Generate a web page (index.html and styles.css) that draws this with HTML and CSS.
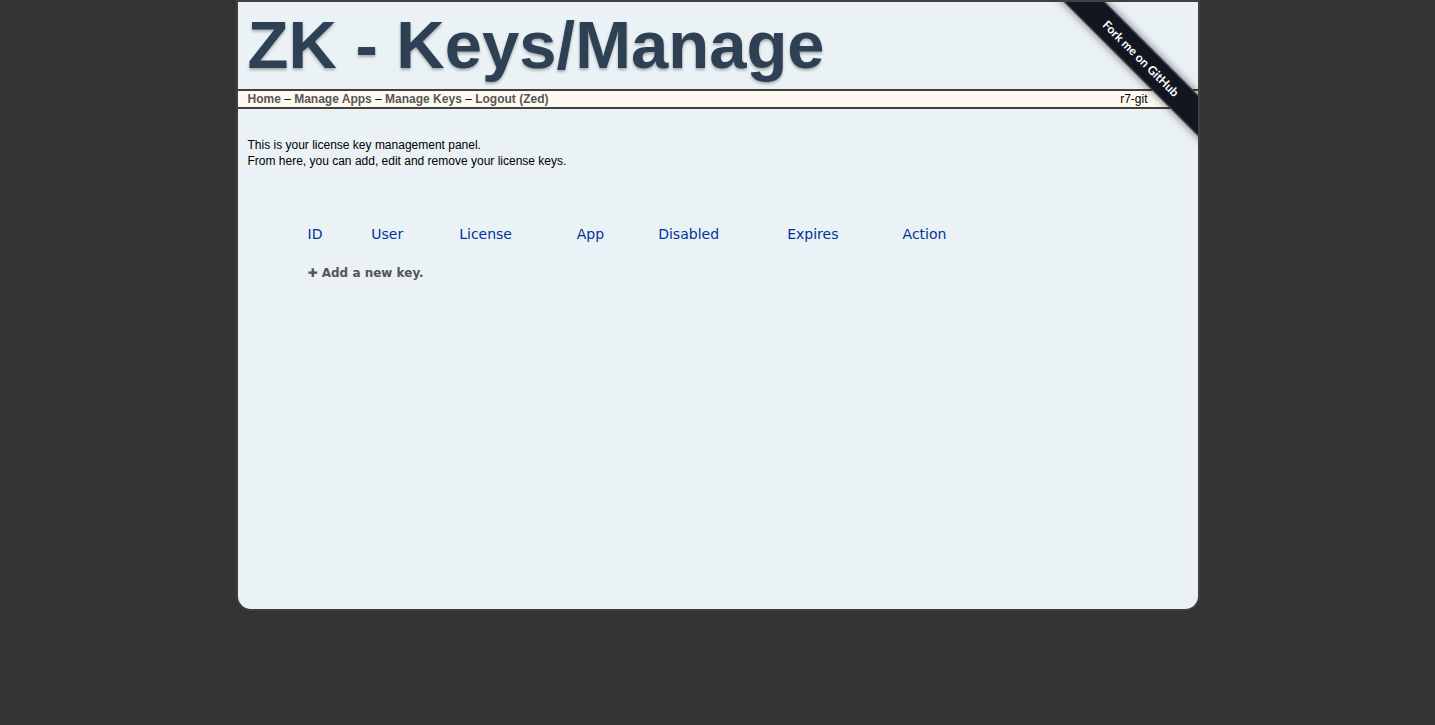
FILE: index.html
```html
<!DOCTYPE html>
<html lang="en">
<head>
<meta charset="utf-8">
<title>ZK - Keys/Manage</title>
<link rel="stylesheet" href="styles.css">
</head>
<body>
<div class="page">
  <header class="header"><h1 class="title">ZK - Keys/Manage</h1></header>
  <nav class="nav">
    <div><a href="#">Home</a> – <a href="#">Manage Apps</a> – <a href="#">Manage Keys</a> – <a href="#">Logout (Zed)</a></div>
    <span class="version">r7-git</span>
  </nav>
  <main class="content">
    <p class="intro">This is your license key management panel.<br>From here, you can add, edit and remove your license keys.</p>
    <table class="keys">
      <thead>
        <tr><th>ID</th><th>User</th><th>License</th><th>App</th><th>Disabled</th><th>Expires</th><th>Action</th></tr>
      </thead>
      <tbody>
        <tr><td colspan="7"><a class="add" href="#">✚ Add a new key.</a></td></tr>
      </tbody>
    </table>
  </main>
  <div class="corner"><a class="ribbon" href="#">Fork me on GitHub</a></div>
</div>
</body>
</html>
```
FILE: styles.css
```css
body {
  margin: 0;
  background: #333;
  color: #000;
  font: 12px/16px "Liberation Sans", Arial, sans-serif;
}

a {
  color: #555;
  font-weight: bold;
  text-decoration: none;
}

.page {
  position: relative;
  box-sizing: border-box;
  max-width: 964px;
  min-height: 611px;
  margin: 0 auto;
  border: 2px solid #3f3f3f;
  border-radius: 0 0 15px 15px;
  background: #eaf2f5;
}

.header {
  padding: 0 10px 2px;
}

.title {
  margin: 0;
  color: #2e4053;
  font-size: 67px;
  line-height: 85px;
  text-shadow: 0 2px 3px rgba(0, 0, 0, 0.3);
}

.nav {
  display: flex;
  justify-content: space-between;
  padding: 0 50px 0 10px;
  border: solid #433f3f;
  border-width: 2px 0;
  background: #fffaf0;
}

.content {
  padding: 28px 10px;
}

.intro {
  margin: 0;
}

.keys {
  width: 700px;
  margin: 45px;
  border-collapse: collapse;
  font-family: "DejaVu Sans", sans-serif;
  text-align: left;
}

.keys th {
  padding: 12px 15px;
  color: #039;
  font-size: 14px;
  font-weight: normal;
}

.keys td {
  padding: 10px 15px;
  border-top: 1px solid #e8edff;
}

.corner {
  position: absolute;
  top: 0;
  right: 0;
  width: 149px;
  height: 149px;
  overflow: hidden;
}

.ribbon {
  position: absolute;
  top: 42px;
  left: -28px;
  box-sizing: border-box;
  width: 240px;
  height: 29px;
  border: 1px solid #4d515b;
  background: #121621;
  box-shadow: 0 0 8px rgba(0, 0, 0, 0.6);
  color: #fff;
  font: bold 12px/27px Lato, sans-serif;
  text-align: center;
  transform: rotate(45deg);
}
```
